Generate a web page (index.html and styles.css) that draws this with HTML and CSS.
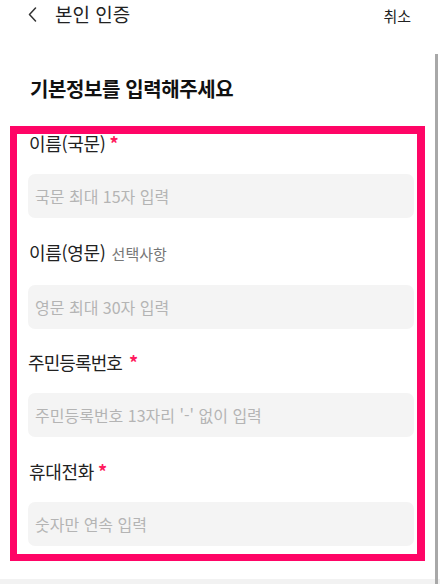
FILE: index.html
```
<!DOCTYPE html>
<html lang="ko">
<head>
<meta charset="utf-8">
<title>본인 인증</title>
<link rel="stylesheet" href="styles.css">
</head>
<body>
<div class="page">
  <header class="header">
    <div class="header-left">
      <svg class="back" width="10" height="16" viewBox="0 0 10 16" aria-hidden="true">
        <polyline points="7.5,2 1.5,8.5 7.5,15" fill="none" stroke="#333" stroke-width="1.5" stroke-linecap="round" stroke-linejoin="round"/>
      </svg>
      <span class="header-title">본인 인증</span>
    </div>
    <span class="cancel">취소</span>
  </header>

  <h1 class="title">기본정보를 입력해주세요</h1>

  <form class="form">
    <div class="field">
      <label class="label">이름(국문)<span class="req">*</span></label>
      <input class="input" type="text" placeholder="국문 최대 15자 입력">
    </div>
    <div class="field">
      <label class="label">이름(영문)<span class="opt">선택사항</span></label>
      <input class="input" type="text" placeholder="영문 최대 30자 입력">
    </div>
    <div class="field">
      <label class="label label-tight">주민등록번호<span class="req req-wide">*</span></label>
      <input class="input" type="text" placeholder="주민등록번호 13자리 '-' 없이 입력">
    </div>
    <div class="field">
      <label class="label">휴대전화<span class="req">*</span></label>
      <input class="input" type="text" placeholder="숫자만 연속 입력">
    </div>
  </form>

  <div class="bottom-bar"></div>

  <div class="highlight" aria-hidden="true"></div>
  <div class="scrollbar" aria-hidden="true"></div>
</div>
</body>
</html>
```

FILE: styles.css
```
* {
  box-sizing: border-box;
}

html, body {
  margin: 0;
  padding: 0;
  background: #ffffff;
}

body {
  font-family: "Noto Sans CJK KR", "Noto Sans", sans-serif;
  color: #222222;
}

.page {
  position: relative;
  width: 440px;
  height: 584px;
  overflow: hidden;
  display: flex;
  flex-direction: column;
}

.header {
  display: flex;
  justify-content: space-between;
  align-items: flex-start;
  padding: 4px 29px 0 28px;
  height: 24px;
}

.header-left {
  display: flex;
  align-items: center;
  gap: 17px;
  height: 20px;
}

.back {
  display: block;
}

.header-title {
  font-size: 19px;
  line-height: 20px;
  color: #222222;
}

.cancel {
  font-size: 15px;
  line-height: 20px;
  margin-top: 2px;
  color: #222222;
}

.title {
  margin: 51px 0 0 0;
  padding-left: 30px;
  font-size: 20px;
  line-height: 28px;
  font-weight: 700;
  letter-spacing: -0.4px;
  color: #111111;
}

.form {
  margin: 0;
  padding: 28px 26px 0 28px;
  display: flex;
  flex-direction: column;
  gap: 21.7px;
}

.field {
  display: flex;
  flex-direction: column;
  gap: 19px;
}

.label {
  display: flex;
  align-items: baseline;
  font-size: 18px;
  line-height: 24px;
  letter-spacing: -0.3px;
  color: #222222;
  padding-left: 1px;
}

.label-tight {
  padding-left: 0;
  letter-spacing: -0.9px;
}

.req {
  color: #ff1a5e;
  font-weight: 700;
  margin-left: 4px;
  letter-spacing: 0;
}

.req-wide {
  margin-left: 7px;
}

.opt {
  font-size: 15px;
  color: #777777;
  margin-left: 6px;
  letter-spacing: 0;
}

.input {
  display: block;
  width: 100%;
  height: 44px;
  border: none;
  outline: none;
  border-radius: 7px;
  background: #f4f4f4;
  padding: 0 7px;
  font-family: inherit;
  font-size: 16px;
  color: #222222;
}

.input::placeholder {
  color: #b4b4b4;
}

.bottom-bar {
  margin-top: auto;
  height: 5px;
  background: #f2f2f2;
}

.highlight {
  position: absolute;
  left: 10px;
  top: 126px;
  width: 415px;
  height: 435px;
  border-style: solid;
  border-color: #ff0566;
  border-width: 8px 8px 7px 7px;
}

.scrollbar {
  position: absolute;
  left: 435px;
  top: 54px;
  bottom: 0;
  width: 3px;
  background: #a8a8a8;
}
```
